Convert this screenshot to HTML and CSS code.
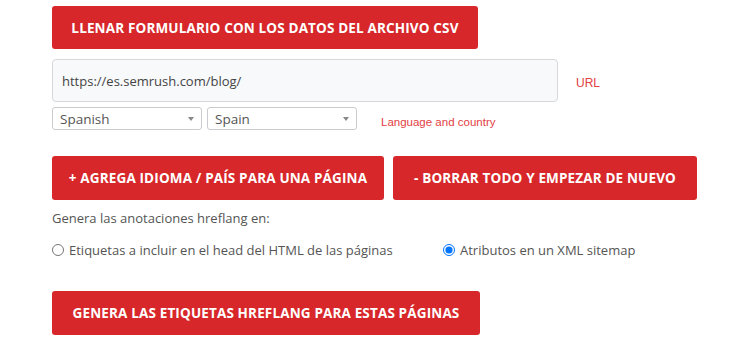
FILE: index.html
```html
<!DOCTYPE html>
<html lang="es">
<head>
    <meta charset="UTF-8">
    <title>Generador hreflang</title>
    <link rel="stylesheet" href="styles.css">
</head>
<body>
    <div class="tool">
        <button class="btn btn-csv">LLENAR FORMULARIO CON LOS DATOS DEL ARCHIVO CSV</button>

        <div class="row url-row">
            <input type="text" class="url-input" value="https://es.semrush.com/blog/">
            <span class="hint hint-url">URL</span>
        </div>

        <div class="row lang-row">
            <div class="sel-wrap">
                <select class="sel">
                    <option>Spanish</option>
                </select>
            </div>
            <div class="sel-wrap">
                <select class="sel">
                    <option>Spain</option>
                </select>
            </div>
            <span class="hint hint-lang">Language and country</span>
        </div>

        <div class="row actions">
            <button class="btn btn-add">+ AGREGA IDIOMA / PAÍS PARA UNA PÁGINA</button>
            <button class="btn btn-reset">- BORRAR TODO Y EMPEZAR DE NUEVO</button>
        </div>

        <p class="intro">Genera las anotaciones hreflang en:</p>

        <div class="row options">
            <label class="opt opt-head"><input type="radio" name="out"> Etiquetas a incluir en el head del HTML de las páginas</label>
            <label class="opt"><input type="radio" name="out" checked> Atributos en un XML sitemap</label>
        </div>

        <button class="btn btn-go">GENERA LAS ETIQUETAS HREFLANG PARA ESTAS PÁGINAS</button>
    </div>
</body>
</html>
```

FILE: styles.css
```css
body {
    margin: 0;
    background: #fff;
    font-family: "Open Sans", sans-serif;
    color: #555;
}
.tool {
    padding: 6px 0 0 52px;
}
.row {
    display: flex;
    align-items: center;
}
.btn {
    display: block;
    background: #d8272a;
    color: #fff;
    border: none;
    border-radius: 3px;
    font-family: "Open Sans", sans-serif;
    font-weight: 700;
    font-size: 13.5px;
    letter-spacing: 0.15px;
    cursor: pointer;
    padding: 0;
    text-align: center;
}
.btn-csv {
    width: 426px;
    height: 43px;
}
.url-row {
    margin-top: 10px;
}
.url-input {
    box-sizing: border-box;
    width: 506px;
    height: 43px;
    padding: 0 9px;
    background: #f8f9fb;
    border: 1px solid #d6d8dc;
    border-radius: 4px;
    font-family: "Open Sans", sans-serif;
    font-size: 13px;
    color: #444;
}
.hint {
    color: #e24043;
    font-family: "Liberation Sans", Arial, sans-serif;
    font-size: 12px;
    line-height: 14px;
}
.hint-url {
    margin: 4px 0 0 18px;
}
.lang-row {
    margin-top: 5px;
    gap: 5px;
    align-items: flex-start;
}
.sel-wrap {
    position: relative;
}
.sel-wrap::after {
    content: "";
    position: absolute;
    right: 8px;
    top: 10px;
    border-left: 3.5px solid transparent;
    border-right: 3.5px solid transparent;
    border-top: 4px solid #888;
    pointer-events: none;
}
.sel {
    display: block;
    box-sizing: border-box;
    width: 150px;
    height: 23px;
    padding: 0 7px;
    background: #fff;
    border: 1px solid #c9cbcf;
    border-radius: 3px;
    font-family: "Open Sans", sans-serif;
    font-size: 13.5px;
    color: #555;
    -webkit-appearance: none;
    appearance: none;
}
.hint-lang {
    margin: 8px 0 0 19px;
    font-size: 11.5px;
}
.actions {
    margin-top: 26px;
    gap: 9px;
}
.btn-add {
    width: 332px;
    height: 44px;
}
.btn-reset {
    width: 304px;
    height: 44px;
}
.intro {
    margin: 8px 0 0;
    font-size: 13px;
    line-height: 20px;
}
.options {
    margin-top: 13px;
    font-size: 13px;
}
.opt {
    display: flex;
    align-items: center;
    gap: 5px;
}
.opt input {
    margin: 0;
    width: 12px;
    height: 12px;
}
.opt-head {
    width: 391px;
}
.btn-go {
    margin-top: 32px;
    width: 428px;
    height: 44px;
}
```
